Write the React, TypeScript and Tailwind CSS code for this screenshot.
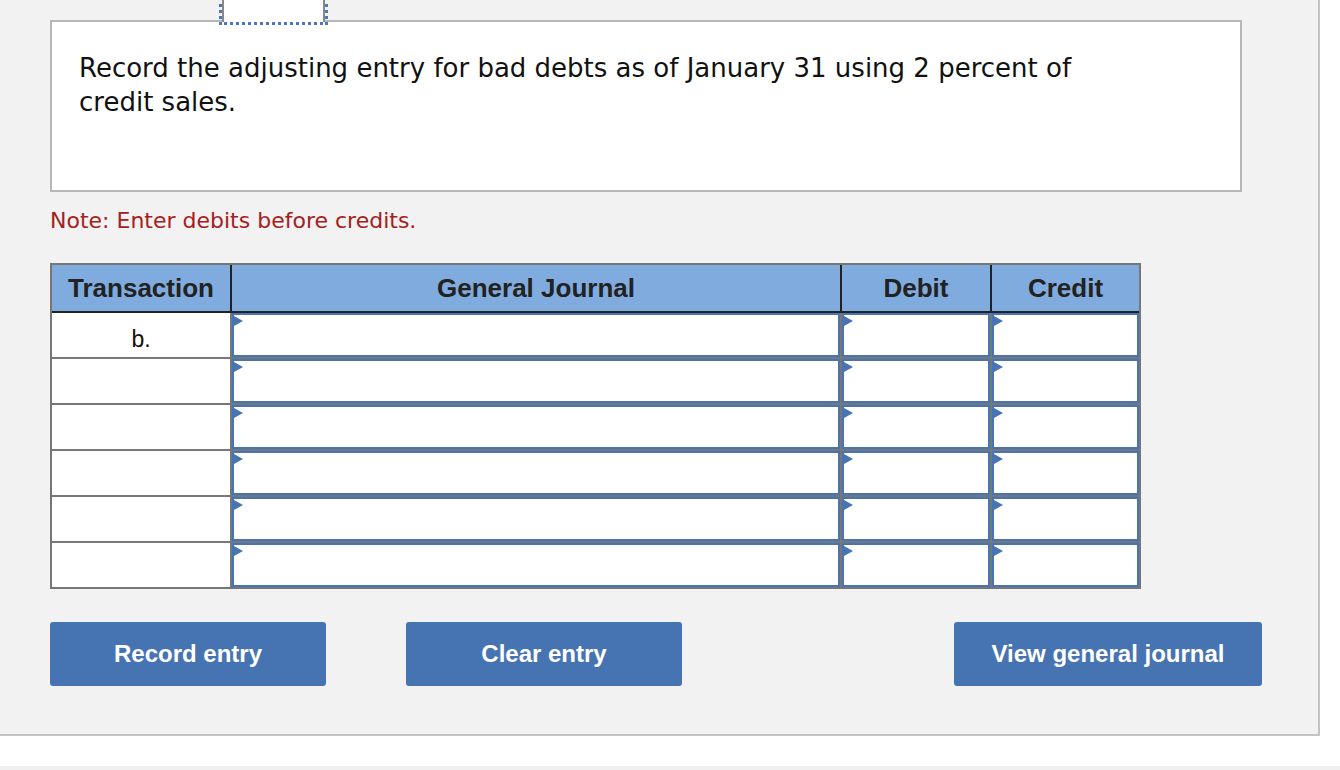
import React from "react";

const rows = ["b.", "", "", "", "", ""];

function EntryInput() {
  return (
    <div className="relative h-full w-full border-2 border-[#4674b4] bg-white">
      {/* little marker arrow in the corner */}
      <div className="absolute left-0 top-[1px] h-0 w-0 border-y-[5px] border-l-[9px] border-y-transparent border-l-[#4674b4]" />
    </div>
  );
}

export default function App() {
  return (
    <div className="min-h-[770px] w-[1340px] bg-white">
      <div className="w-[1320px] border-b-2 border-r-2 border-[#c4c4c4] bg-[#f2f2f2] pb-[48px]">
        {/* tab stub */}
        <div className="flex pl-[222px]">
          <div className="relative z-10 h-[22px] w-[103px] border-x-2 border-[#888] bg-white outline-[3px] outline-dotted outline-[#4a78bd]" />
        </div>

        <div className="pl-[50px]">
          <div className="-mt-[2px] h-[172px] w-[1192px] border-2 border-[#b8b8b8] bg-white pl-[27px] pt-[29px]">
            <p className="text-[26px] leading-[34px] text-[#111]" style={{ fontFamily: "'DejaVu Sans', Verdana, sans-serif" }}>
              Record the adjusting entry for bad debts as of January 31 using 2 percent of
              <br />
              credit sales.
            </p>
          </div>

          <p className="mt-[16px] h-[26px] text-[22px] leading-[26px] text-[#a5201b]" style={{ fontFamily: "'DejaVu Sans', Verdana, sans-serif" }}>
            Note: Enter debits before credits.
          </p>

          {/* journal table */}
          <div className="mt-[29px] w-[1091px] border-2 border-[#777] font-['Liberation_Sans',Arial,sans-serif]">
            <div className="flex h-[48px] border-b-2 border-[#222] bg-[#80abdf] text-[26px] font-bold text-[#222]">
              <div className="flex w-[178px] items-center justify-center">Transaction</div>
              <div className="flex w-[610px] items-center justify-center border-l-2 border-[#222]">General Journal</div>
              <div className="flex w-[150px] items-center justify-center border-l-2 border-[#222]">Debit</div>
              <div className="flex w-[149px] items-center justify-center border-l-2 border-[#222]">Credit</div>
            </div>
            {rows.map((label, i) => (
              <div key={i} className={`flex bg-white ${i < rows.length - 1 ? "h-[46px] border-b-2 border-[#777]" : "h-[44px]"}`}>
                <div className="flex w-[178px] items-start justify-center pt-[9px] text-[23px] text-[#111]">{label}</div>
                <div className="w-[610px] border-l-2 border-[#777]">
                  <EntryInput />
                </div>
                <div className="w-[150px] border-l-2 border-[#777]">
                  <EntryInput />
                </div>
                <div className="w-[149px] border-l-2 border-[#777]">
                  <EntryInput />
                </div>
              </div>
            ))}
          </div>

          {/* actions */}
          <div className="mt-[33px] flex w-[1212px] items-center font-['Liberation_Sans',Arial,sans-serif] text-[24px] font-bold text-white">
            <button className="h-[64px] w-[276px] rounded-[3px] bg-[#4674b2]">Record entry</button>
            <button className="ml-[80px] h-[64px] w-[276px] rounded-[3px] bg-[#4674b2]">Clear entry</button>
            <button className="ml-auto h-[64px] w-[308px] rounded-[3px] bg-[#4674b2]">View general journal</button>
          </div>
        </div>
      </div>
      <div className="mt-[30px] h-[4px] w-full bg-[#f0f0f0]" />
    </div>
  );
}
